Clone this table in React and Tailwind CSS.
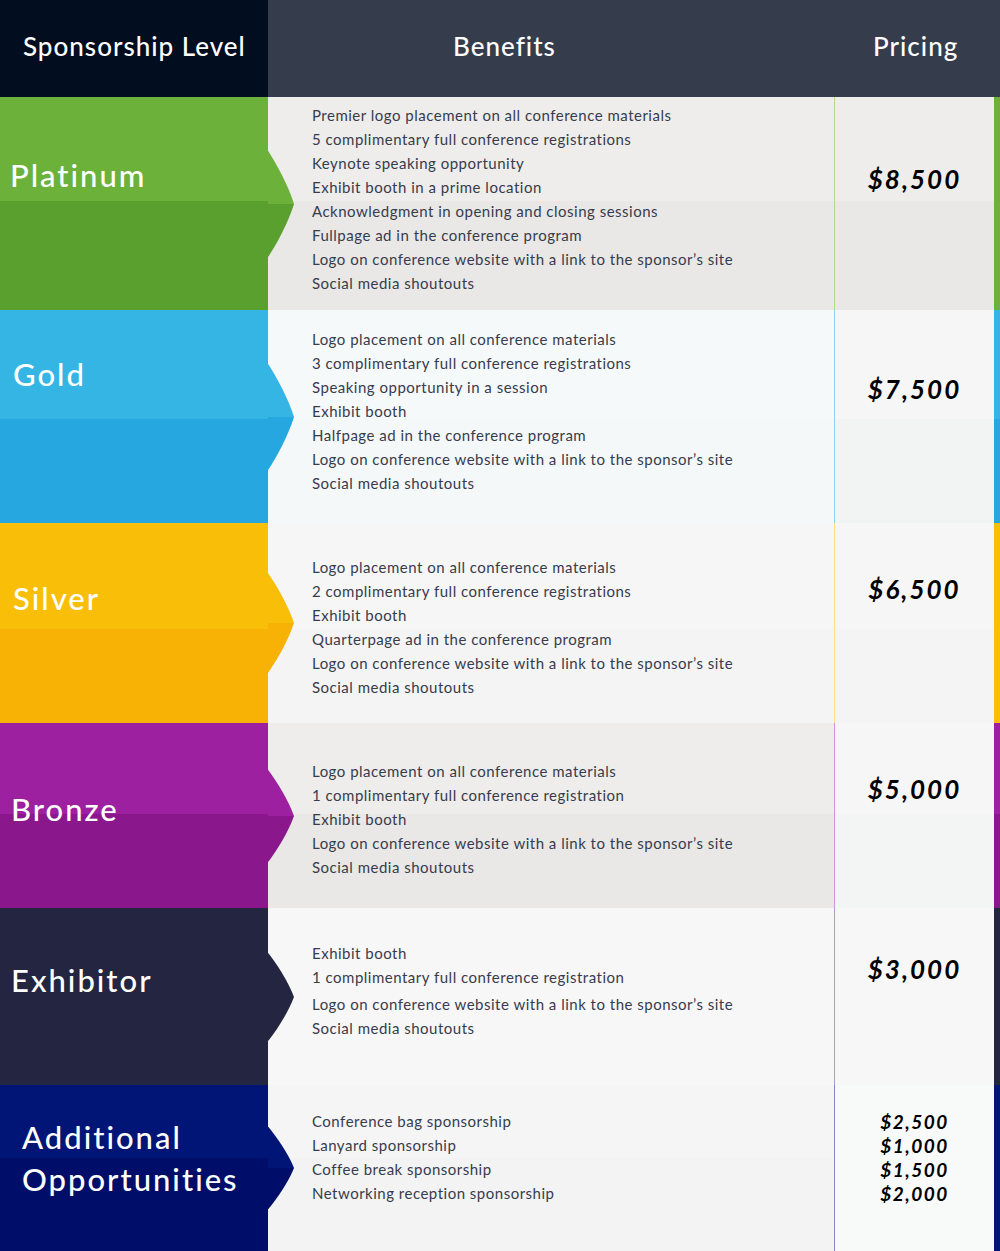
import React from "react";

const rows = [
  {
    name: ["Platinum"],
    h: "h-[213px]",
    left: "bg-[linear-gradient(to_bottom,#6cb23a_49%,#5aa02e_49%)]",
    top: "#6cb23a",
    bottom: "#5aa02e",
    labelPad: "pt-[57px] pl-[10px]",
    body: "bg-[linear-gradient(to_bottom,#eeedeb_49%,#e9e8e6_49%)]",
    bodyPad: "pt-[6px]",
    price: "bg-[linear-gradient(to_bottom,#eeedeb_49%,#e9e8e6_49%)] border-[#b2d98f]",
    pricePad: "pt-[67px]",
    bar: "bg-[#6cb23a]",
    benefits: [
      "Premier logo placement on all conference materials",
      "5 complimentary full conference registrations",
      "Keynote speaking opportunity",
      "Exhibit booth in a prime location",
      "Acknowledgment in opening and closing sessions",
      "Fullpage ad in the conference program",
      "Logo on conference website with a link to the sponsor’s site",
      "Social media shoutouts",
    ],
    prices: ["$8,500"],
  },
  {
    name: ["Gold"],
    h: "h-[213px]",
    left: "bg-[linear-gradient(to_bottom,#35b5e3_51%,#27a7df_51%)]",
    top: "#35b5e3",
    bottom: "#27a7df",
    labelPad: "pt-[43px] pl-[13px]",
    body: "bg-[linear-gradient(to_bottom,#f6f9fa_51%,#f4f8f9_51%)]",
    bodyPad: "pt-[17px]",
    price: "bg-[linear-gradient(to_bottom,#f6f6f6_51%,#f2f3f3_51%)] border-[#8fd3ef]",
    pricePad: "pt-[64px]",
    bar: "bg-[linear-gradient(to_bottom,#35b5e3_51%,#27a7df_51%)]",
    benefits: [
      "Logo placement on all conference materials",
      "3 complimentary full conference registrations",
      "Speaking opportunity in a session",
      "Exhibit booth",
      "Halfpage ad in the conference program",
      "Logo on conference website with a link to the sponsor’s site",
      "Social media shoutouts",
    ],
    prices: ["$7,500"],
  },
  {
    name: ["Silver"],
    h: "h-[200px]",
    left: "bg-[linear-gradient(to_bottom,#f9be08_53%,#f7b205_53%)]",
    top: "#f9be08",
    bottom: "#f7b205",
    labelPad: "pt-[54px] pl-[13px]",
    body: "bg-[linear-gradient(to_bottom,#f6f6f6_53%,#f4f4f4_53%)]",
    bodyPad: "pt-[32px]",
    price: "bg-[linear-gradient(to_bottom,#f6f6f6_53%,#f4f4f4_53%)] border-[#fbe08a]",
    pricePad: "pt-[51px]",
    bar: "bg-[#f9be08]",
    benefits: [
      "Logo placement on all conference materials",
      "2 complimentary full conference registrations",
      "Exhibit booth",
      "Quarterpage ad in the conference program",
      "Logo on conference website with a link to the sponsor’s site",
      "Social media shoutouts",
    ],
    prices: ["$6,500"],
  },
  {
    name: ["Bronze"],
    h: "h-[185px]",
    left: "bg-[linear-gradient(to_bottom,#9c20a0_49%,#8a188c_49%)]",
    top: "#9c20a0",
    bottom: "#8a188c",
    labelPad: "pt-[65px] pl-[11px]",
    body: "bg-[linear-gradient(to_bottom,#eeedeb_49%,#e9e8e6_49%)]",
    bodyPad: "pt-[36px]",
    price: "bg-[linear-gradient(to_bottom,#f6f6f6_49%,#f3f4f4_49%)] border-[#d894d8]",
    pricePad: "pt-[51px]",
    bar: "bg-[linear-gradient(to_bottom,#9c20a0_49%,#8a188c_49%)]",
    benefits: [
      "Logo placement on all conference materials",
      "1 complimentary full conference registration",
      "Exhibit booth",
      "Logo on conference website with a link to the sponsor’s site",
      "Social media shoutouts",
    ],
    prices: ["$5,000"],
  },
  {
    name: ["Exhibitor"],
    h: "h-[177px]",
    left: "bg-[#242540]",
    top: "#242540",
    bottom: "#242540",
    labelPad: "pt-[51px] pl-[11px]",
    body: "bg-[#f7f7f7]",
    bodyPad: "pt-[33px]",
    price: "bg-[#f7f7f7] border-[#a4a4b4]",
    pricePad: "pt-[46px]",
    bar: "bg-[#242540]",
    benefits: [
      "Exhibit booth",
      "1 complimentary full conference registration",
      "Logo on conference website with a link to the sponsor’s site",
      "Social media shoutouts",
    ],
    prices: ["$3,000"],
    gaps: true,
  },
  {
    name: ["Additional", "Opportunities"],
    h: "h-[166px]",
    left: "bg-[linear-gradient(to_bottom,#001575_44%,#000e69_44%)]",
    top: "#001575",
    bottom: "#000e69",
    labelPad: "pt-[31px] pl-[22px]",
    body: "bg-[linear-gradient(to_bottom,#f5f5f5_44%,#f3f3f3_44%)]",
    bodyPad: "pt-[24px]",
    price: "bg-[#f8f9f9] border-[#8088c8]",
    pricePad: "pt-[25px]",
    bar: "bg-[#001575]",
    benefits: [
      "Conference bag sponsorship",
      "Lanyard sponsorship",
      "Coffee break sponsorship",
      "Networking reception sponsorship",
    ],
    prices: ["$2,500", "$1,000", "$1,500", "$2,000"],
    small: true,
  },
];

function Arrow({ top, bottom }) {
  return (
    <svg
      className="absolute left-full top-1/2 -translate-y-1/2 h-1/2 w-[26px] z-10"
      viewBox="0 0 26 100"
      preserveAspectRatio="none"
    >
      <path d="M0 0 C9 13 20 32 26 50 L0 50 Z" fill={top} />
      <path d="M0 50 L26 50 C20 68 9 87 0 100 Z" fill={bottom} />
    </svg>
  );
}

function Row({ row }) {
  return (
    <div className={`grid grid-cols-[268px_566px_160px_6px] ${row.h}`}>
      <div className={`relative ${row.left} ${row.labelPad}`}>
        {row.name.map((n) => (
          <div
            key={n}
            className="text-white text-[31px] leading-[42px] font-medium tracking-[2px]"
          >
            {n}
          </div>
        ))}
        <Arrow top={row.top} bottom={row.bottom} />
      </div>
      <div className={`${row.body} ${row.bodyPad} pl-[44px]`}>
        <ul className="text-[15px] leading-[24px] tracking-[0.5px] text-[#373c4d]">
          {row.benefits.map((b, i) => (
            <li key={i} className={row.gaps && i === 2 ? "mt-[3px]" : ""}>
              {b}
            </li>
          ))}
        </ul>
      </div>
      <div className={`${row.price} border-l ${row.pricePad} text-center`}>
        {row.prices.map((p) => (
          <div
            key={p}
            className={
              row.small
                ? "text-[19px] leading-[24px] italic font-bold tracking-[1.5px] text-black"
                : "text-[26px] leading-[30px] italic font-bold tracking-[2px] text-black"
            }
          >
            {p}
          </div>
        ))}
      </div>
      <div className={row.bar}></div>
    </div>
  );
}

export default function App() {
  return (
    <div className="w-[1000px] h-[1251px] overflow-hidden bg-[#f5f5f5] font-['Lato','Open_Sans',sans-serif]">
      <div className="grid grid-cols-[268px_566px_166px] h-[97px] text-white text-[26px] font-medium tracking-[1px]">
        <div className="bg-[#020d20] flex items-center pl-[23px] pb-[4px]">
          Sponsorship Level
        </div>
        <div className="bg-[#353d4c] flex items-center pl-[185px] pb-[4px]">
          Benefits
        </div>
        <div className="bg-[#353d4c] flex items-center pl-[39px] pb-[4px]">
          Pricing
        </div>
      </div>
      {rows.map((r) => (
        <Row key={r.name[0]} row={r} />
      ))}
    </div>
  );
}
